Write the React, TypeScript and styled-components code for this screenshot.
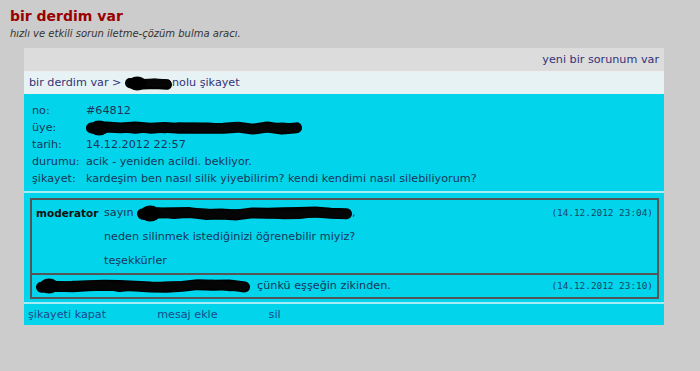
import styled, { createGlobalStyle } from 'styled-components'

const GlobalStyle = createGlobalStyle`
    body {
        margin: 0;
        background: #cccccc;
        font-family: "DejaVu Sans", Verdana, sans-serif;
        font-size: 11.2px;
        color: #18365a;
    }
`

const Header = styled.header`
    padding: 7px 10px 0;
`

const Title = styled.h1`
    margin: 0;
    font-size: 14px;
    line-height: 18px;
    font-weight: bold;
    color: #990000;
`

const Tagline = styled.div`
    margin-top: 2px;
    font-size: 10px;
    line-height: 14px;
    font-style: italic;
    color: #333;
`

const Box = styled.div`
    margin: 7px 0 0 24px;
    width: 640px;
`

const TopBar = styled.div`
    height: 23px;
    line-height: 23px;
    background: #dcdcdc;
    border-bottom: 1px solid #efefef;
    text-align: right;
    padding-right: 5px;
    color: #33337a;
`

const Crumbs = styled.div`
    height: 22px;
    line-height: 22px;
    background: #e6f2f3;
    padding-left: 5px;
    color: #33337a;
    display: flex;
    align-items: center;
    white-space: pre;
`

const Panel = styled.div<{ $pad: string }>`
    background: #02d4eb;
    padding: ${({ $pad }) => $pad};
    & + & {
        border-top: 2px solid #a6ecf6;
    }
`

const InfoRow = styled.div`
    display: flex;
    line-height: 17px;
`

const InfoLabel = styled.span`
    width: 54px;
    flex: none;
`

const InfoValue = styled.span`
    display: flex;
    align-items: center;
`

const Thread = styled.div`
    border: 2px solid #555;
`

const Post = styled.div<{ $lh: number }>`
    display: flex;
    align-items: flex-start;
    line-height: ${({ $lh }) => $lh}px;
    padding: 1px 4px 0 4px;
    & + & {
        border-top: 2px solid #555;
        padding-top: 0;
    }
`

const Author = styled.b`
    width: 68px;
    flex: none;
    font-size: 10.5px;
    color: #111;
`

const Body = styled.div`
    flex: 1;
`

const Line = styled.div`
    display: flex;
    align-items: center;
    white-space: pre;
`

const Stamp = styled.span`
    font-family: "DejaVu Sans Mono", monospace;
    font-size: 9.4px;
    color: #16466a;
    flex: none;
`

const Footer = styled.div`
    height: 21px;
    line-height: 21px;
    display: flex;
    gap: 51px;
    padding-left: 4px;
`

const FootLink = styled.a`
    color: #1a4a8c;
    text-decoration: none;
`

// black marker scribble that hides a name
const Scribble = ({ w, h, seed }: { w: number; h: number; seed: number }) => {
    let s = seed
    const rand = () => {
        s = (s * 9301 + 49297) % 233280
        return s / 233280
    }
    const n = Math.max(3, Math.round(w / 16))
    const mid = h / 2
    const thick = Math.min(h * 0.68, 11)
    const pts: string[] = []
    const pts2: string[] = []
    for (let i = 0; i <= n; i++) {
        const x = thick / 2 + ((w - thick) * i) / n
        const amp = (h - thick) / 2
        pts.push(`${x.toFixed(1)},${(mid + (rand() - 0.5) * amp).toFixed(1)}`)
        pts2.push(`${x.toFixed(1)},${(mid + (rand() - 0.5) * amp * 1.4).toFixed(1)}`)
    }
    return (
        <svg width={w} height={h} viewBox={`0 0 ${w} ${h}`} style={{ display: 'block' }}>
            <polyline points={pts.join(' ')} fill="none" stroke="#000" strokeWidth={thick}
                strokeLinecap="round" strokeLinejoin="round" />
            <polyline points={pts2.join(' ')} fill="none" stroke="#050505" strokeWidth={thick * 0.8}
                strokeLinecap="round" strokeLinejoin="round" />
            <ellipse cx={thick * 1.2} cy={mid} rx={thick * 0.9} ry={h / 2 - 0.5} fill="#000" />
        </svg>
    )
}

const info: [string, React.ReactNode][] = [
    ['no:', '#64812'],
    ['üye:', <Scribble w={216} h={16} seed={7} />],
    ['tarih:', '14.12.2012 22:57'],
    ['durumu:', 'acik - yeniden acildi. bekliyor.'],
    ['şikayet:', 'kardeşim ben nasıl silik yiyebilirim? kendi kendimi nasıl silebiliyorum?'],
]

const App = () => {
    return (
        <>
            <GlobalStyle />
            <Header>
                <Title>bir derdim var</Title>
                <Tagline>hızlı ve etkili sorun iletme-çözüm bulma aracı.</Tagline>
            </Header>
            <Box>
                <TopBar>yeni bir sorunum var</TopBar>
                <Crumbs>
                    bir derdim var &gt; <Scribble w={47} h={15} seed={3} />nolu şikayet
                </Crumbs>
                <Panel $pad="8px 0 4px 8px">
                    {info.map(([label, value]) => (
                        <InfoRow key={label}>
                            <InfoLabel>{label}</InfoLabel>
                            <InfoValue>{value}</InfoValue>
                        </InfoRow>
                    ))}
                </Panel>
                <Panel $pad="5px 5px 3px 6px">
                    <Thread>
                        <Post $lh={24}>
                            <Author>moderator</Author>
                            <Body>
                                <Line>sayın <Scribble w={215} h={17} seed={11} />,</Line>
                                <Line>neden silinmek istediğinizi öğrenebilir miyiz?</Line>
                                <Line>teşekkürler</Line>
                            </Body>
                            <Stamp>(14.12.2012 23:04)</Stamp>
                        </Post>
                        <Post $lh={22}>
                            <Body>
                                <Line><Scribble w={214} h={16} seed={19} />  çünkü eşşeğin zikinden.</Line>
                            </Body>
                            <Stamp>(14.12.2012 23:10)</Stamp>
                        </Post>
                    </Thread>
                </Panel>
                <Panel $pad="0">
                    <Footer>
                        <FootLink href="#">şikayeti kapat</FootLink>
                        <FootLink href="#">mesaj ekle</FootLink>
                        <FootLink href="#">sil</FootLink>
                    </Footer>
                </Panel>
            </Box>
        </>
    )
}

export default App
